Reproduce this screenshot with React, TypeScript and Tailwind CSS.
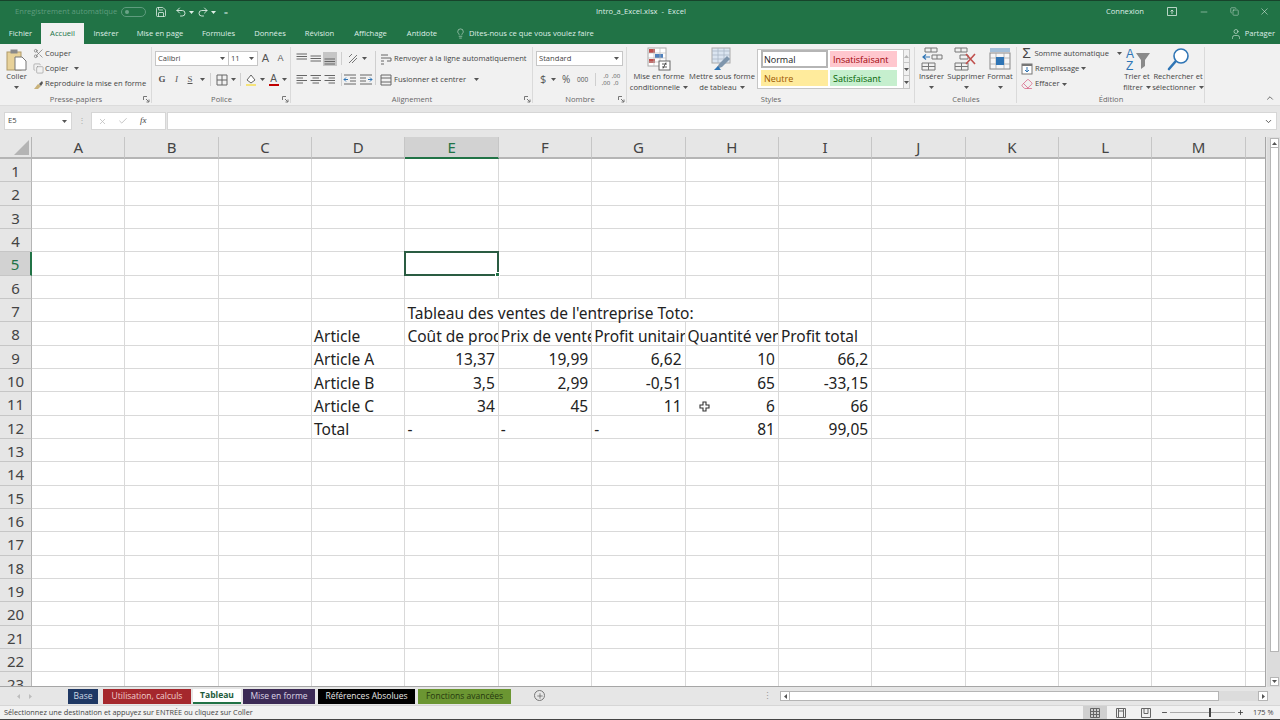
import React from 'react';
import { Save, Undo2, Redo2, Lightbulb, User, Scissors, Copy, Minus, X, Check, ChevronUp, ChevronDown, Plus, Eraser } from 'lucide-react';

const UI = "font-['Open_Sans',sans-serif]";

const columns = ['A', 'B', 'C', 'D', 'E', 'F', 'G', 'H', 'I', 'J', 'K', 'L', 'M', ''];
const rows = Array.from({ length: 23 }, (_, i) => i + 1);

type Cell = { text: string; right?: boolean; spill?: boolean };
const data: Record<string, Cell> = {
  D8: { text: 'Article' },
  D9: { text: 'Article A' },
  D10: { text: 'Article B' },
  D11: { text: 'Article C' },
  D12: { text: 'Total' },
  E7: { text: "Tableau des ventes de l'entreprise Toto:", spill: true },
  E8: { text: 'Coût de production' },
  F8: { text: 'Prix de vente' },
  G8: { text: 'Profit unitaire' },
  H8: { text: 'Quantité vendue' },
  I8: { text: 'Profit total' },
  E9: { text: '13,37', right: true },
  F9: { text: '19,99', right: true },
  G9: { text: '6,62', right: true },
  H9: { text: '10', right: true },
  I9: { text: '66,2', right: true },
  E10: { text: '3,5', right: true },
  F10: { text: '2,99', right: true },
  G10: { text: '-0,51', right: true },
  H10: { text: '65', right: true },
  I10: { text: '-33,15', right: true },
  E11: { text: '34', right: true },
  F11: { text: '45', right: true },
  G11: { text: '11', right: true },
  H11: { text: '6', right: true },
  I11: { text: '66', right: true },
  E12: { text: '-' },
  F12: { text: '-' },
  G12: { text: '-' },
  H12: { text: '81', right: true },
  I12: { text: '99,05', right: true },
};

const Caret = ({ className = '' }: { className?: string }) => (
  <svg width="5" height="3" viewBox="0 0 5 3" className={`shrink-0 ${className}`}>
    <path d="M0 0h5L2.5 3z" fill="#555" />
  </svg>
);

const Launcher = () => (
  <svg width="7" height="7" viewBox="0 0 7 7" className="shrink-0">
    <path d="M.5 4V.5H4M3 3l3 3M6 3.5V6H3.5" fill="none" stroke="#777" strokeWidth="1" />
  </svg>
);

const Lines = ({ align, shade = false }: { align: 'l' | 'c' | 'r' | 't' | 'm' | 'b'; shade?: boolean }) => {
  const short = align === 'l' ? [1.5, 8] : align === 'c' ? [3.5, 10] : align === 'r' ? [5.5, 12] : [1.5, 12];
  const ys = align === 't' ? [2, 4.5, 7] : align === 'm' ? [4, 6.5, 9] : align === 'b' ? [7, 9.5, 12] : [2.5, 5, 7.5, 10];
  return (
    <svg width="14" height="14" viewBox="0 0 14 14" className={shade ? 'bg-[#c6c6c6]' : ''}>
      {ys.map((y, i) => (
        <path key={y} d={i % 2 ? `M${short[0]} ${y}H${short[1]}` : `M1.5 ${y}H12`} stroke="#666" strokeWidth="1" />
      ))}
    </svg>
  );
};

const Group = ({ width, label, launcher, children }: { width: string; label: string; launcher?: boolean; children: React.ReactNode }) => (
  <div className={`flex flex-col h-full shrink-0 relative ${width}`}>
    <span className="absolute right-0 top-[3px] bottom-[2px] w-px bg-[#dadada]" />
    <div className="flex-1 flex min-h-0">{children}</div>
    <div className="h-[13px] pt-[3px] flex items-center relative">
      <span className="flex-1 text-center text-[7.6px] leading-none text-[#666]">{label}</span>
      {launcher && (
        <span className="absolute right-[2px] top-[4px]">
          <Launcher />
        </span>
      )}
    </div>
  </div>
);

const BigButton = ({ width, icon, line1, line2, caret = true }: { width: string; icon: React.ReactNode; line1: string; line2?: string; caret?: boolean }) => (
  <div className={`flex flex-col items-center shrink-0 ${width}`}>
    <div className="h-[24px] flex items-center">{icon}</div>
    <span className="text-[7.6px] leading-[11px] text-[#444] whitespace-nowrap">{line1}</span>
    <span className="text-[7.6px] leading-[11px] text-[#444] whitespace-nowrap flex items-center gap-[3px] h-[11px]">
      {line2}
      {caret && <Caret />}
    </span>
  </div>
);

const PasteIcon = () => (
  <svg width="21" height="22" viewBox="0 0 21 22">
    <rect x="1" y="3" width="14" height="18" fill="#e8d29a" stroke="#b09a68" />
    <rect x="4.5" y="0.5" width="7" height="4" fill="#8a8a8a" />
    <path d="M9 8h7l4 4v9H9z" fill="#fff" stroke="#777" />
  </svg>
);

const CondIcon = () => (
  <svg width="24" height="24" viewBox="0 0 24 24">
    <rect x="1" y="1" width="18" height="18" fill="#fff" stroke="#aaa" />
    <rect x="2" y="2" width="6" height="4" fill="#c0504d" />
    <rect x="8" y="7" width="8" height="4" fill="#4f81bd" />
    <rect x="2" y="12" width="6" height="4" fill="#c0504d" />
    <path d="M7 1v18M13 1v18M1 6h18M1 11h18M1 15h18" stroke="#bbb" strokeWidth=".7" />
    <rect x="12" y="14" width="11" height="9" fill="#fff" stroke="#666" />
    <path d="M15 17h5M15 20h5M19 15.5l-3 6" stroke="#333" strokeWidth=".8" />
  </svg>
);

const TableIcon = () => (
  <svg width="24" height="24" viewBox="0 0 24 24">
    <rect x="2" y="1" width="18" height="15" fill="#dbe5f1" stroke="#aaa" />
    <path d="M2 4h18M2 8h18M2 12h18M8 1v15M14 1v15" stroke="#a9b6c6" strokeWidth=".8" />
    <path d="M6 22l3-5 8-8 3 3-8 8z" fill="#7f96ad" />
    <path d="M4 23h7l-3-4z" fill="#2f75b5" />
  </svg>
);

const InsertIcon = () => (
  <svg width="22" height="24" viewBox="0 0 22 24">
    <path d="M4 1h12v4H4zM10 1v4M1 16h13v7H1zM7.5 16v7M1 19.5h13M11 8h10v4H11zM16 8v4" fill="none" stroke="#777" />
    <path d="M2 10h7M5 7.5L2 10l3 2.5" fill="none" stroke="#2f75b5" strokeWidth="1.2" />
  </svg>
);

const DeleteIcon = () => (
  <svg width="24" height="24" viewBox="0 0 24 24">
    <path d="M1 1h12v4H1zM7 1v4M1 16h13v7H1zM7.5 16v7M1 19.5h13M6 8h8v4H6z" fill="none" stroke="#777" />
    <path d="M12 7l9 10M21 7l-9 10" stroke="#c0504d" strokeWidth="1.6" />
  </svg>
);

const FormatIcon = () => (
  <svg width="22" height="24" viewBox="0 0 22 24">
    <path d="M1 2h20M1 4h20" stroke="#2f75b5" strokeWidth=".8" />
    <rect x="1" y="6" width="20" height="16" fill="#f6f6f6" stroke="#888" />
    <path d="M7 6v16M15 6v16M1 11h20M1 17h20" stroke="#aaa" strokeWidth=".8" />
    <rect x="7" y="10" width="8" height="8" fill="#2f75b5" />
  </svg>
);

const SortIcon = () => (
  <svg width="28" height="25" viewBox="0 0 28 25">
    <text x="3" y="11" fontSize="12" fill="#2f75b5" fontFamily="Liberation Sans">A</text>
    <text x="3" y="23" fontSize="12" fill="#2f75b5" fontFamily="Liberation Sans">Z</text>
    <path d="M13 6h14l-5 7v6l-4 3v-9z" fill="#8a8a8a" />
  </svg>
);

const FindIcon = () => (
  <svg width="24" height="25" viewBox="0 0 24 25">
    <circle cx="15" cy="9" r="7" fill="#fff" stroke="#2f75b5" strokeWidth="1.6" />
    <path d="M9.5 14.5L3 22" stroke="#2f75b5" strokeWidth="2.6" strokeLinecap="round" />
  </svg>
);

const Ribbon = () => (
  <div className={`h-[62px] bg-[#f1f1f1] flex text-[#444] border-b border-[#dcdcdc] ${UI}`}>
    <Group width="w-[152px]" label="Presse-papiers" launcher>
      <div className="w-[33px] flex flex-col items-center pt-[5px]">
        <PasteIcon />
        <span className="text-[7.6px] leading-[11px]">Coller</span>
        <Caret className="mt-[4px]" />
      </div>
      <div className="flex flex-col pt-[2px] text-[7.6px]">
        <div className="h-[15px] flex items-center gap-px"><Scissors size={11} color="#555" strokeWidth={1.2} />Couper</div>
        <div className="h-[16px] flex items-center gap-px"><Copy size={11} color="#888" strokeWidth={1.2} />Copier<Caret className="ml-[5px]" /></div>
        <div className="h-[16px] flex items-center gap-px whitespace-nowrap">
          <svg width="11" height="11" viewBox="0 0 11 11"><path d="M1 10l4-5 3 2-3 3z" fill="#c9b27a" /><path d="M6 5l3-3 1 2-2 3z" fill="#555" /></svg>
          Reproduire la mise en forme
        </div>
      </div>
    </Group>

    <Group width="w-[139px]" label="Police" launcher>
      <div className="flex flex-col pl-[3px] pt-[7px] gap-[6px]">
        <div className="flex items-center h-[15px]">
          <div className="w-[74px] h-[15px] bg-white border border-[#c6c6c6] flex items-center justify-between px-[2px] text-[7.6px]">Calibri<Caret className="mr-[1px]" /></div>
          <div className="w-[29px] h-[15px] bg-white border border-l-0 border-[#c6c6c6] flex items-center justify-between px-[2px] text-[7.6px]">11<Caret className="mr-[1px]" /></div>
          <span className="w-[15px] text-center text-[11px] font-['Liberation_Sans',sans-serif] text-[#555]">A</span>
          <span className="w-[15px] text-center text-[9px] font-['Liberation_Sans',sans-serif] text-[#555]">A</span>
        </div>
        <div className="flex items-center h-[15px] text-[9px] text-[#555] font-['Liberation_Serif',serif]">
          <span className="w-[14px] text-center font-bold">G</span>
          <span className="w-[15px] text-center italic">I</span>
          <span className="w-[12px] text-center underline">S</span>
          <Caret className="ml-[4px]" />
          <span className="w-px h-[13px] bg-[#cfcfcf] mx-[5px]" />
          <svg width="12" height="12" viewBox="0 0 12 12"><path d="M1 1h10v10H1zM6 1v10M1 6h10" fill="none" stroke="#666" /></svg>
          <Caret className="ml-[3px]" />
          <span className="w-px h-[13px] bg-[#cfcfcf] mx-[4px]" />
          <svg width="13" height="13" viewBox="0 0 13 13"><path d="M2 7l4-5 4 5-4 3z" fill="#fff" stroke="#666" /><path d="M1 11h10v2H1z" fill="#f5e37a" /></svg>
          <Caret className="ml-[2px]" />
          <span className="w-[13px] ml-[2px] flex flex-col items-center leading-[9px] font-['Liberation_Sans',sans-serif] text-[10px]">A<span className="w-[10px] h-[2px] bg-[#c00000] mt-[1px]" /></span>
          <Caret className="ml-[2px]" />
        </div>
      </div>
    </Group>

    <Group width="w-[242px]" label="Alignement" launcher>
      <div className="flex flex-col pl-[4px] pt-[7px] gap-[6px] w-[84px] shrink-0">
        <div className="flex items-center h-[15px]">
          <Lines align="t" /><Lines align="m" /><Lines align="b" shade />
          <span className="w-px h-[13px] bg-[#cfcfcf] mx-[4px]" />
          <svg width="14" height="14" viewBox="0 0 14 14"><path d="M3 11l8-8M6 11l5-5M3 5l3-3" stroke="#777" fill="none" /></svg>
          <Caret className="ml-[2px]" />
        </div>
        <div className="flex items-center h-[15px]">
          <Lines align="l" /><Lines align="c" /><Lines align="r" />
          <span className="w-px h-[13px] bg-[#cfcfcf] ml-[4px] mr-[1px]" />
          <svg width="14" height="14" viewBox="0 0 14 14"><path d="M1 2h12M7 5h6M7 8h6M1 11h12" stroke="#666" /><path d="M5 6.5H1M3 4.5l-2 2 2 2" stroke="#2f75b5" fill="none" /></svg>
          <svg width="14" height="14" viewBox="0 0 14 14" className="ml-[2px]"><path d="M1 2h12M1 5h6M1 8h6M1 11h12" stroke="#666" /><path d="M9 6.5h4M11 4.5l2 2-2 2" stroke="#2f75b5" fill="none" /></svg>
        </div>
      </div>
      <div className="w-px h-[34px] bg-[#cfcfcf] mt-[7px]" />
      <div className="flex flex-col pl-[4px] pt-[7px] gap-[6px] text-[7.6px] whitespace-nowrap">
        <div className="h-[15px] flex items-center gap-[2px]">
          <svg width="12" height="12" viewBox="0 0 12 12"><path d="M1 2h7M1 5h10v3H7M1 8h3M1 11h3" fill="none" stroke="#666" /></svg>
          Renvoyer à la ligne automatiquement
        </div>
        <div className="h-[15px] flex items-center gap-[2px]">
          <svg width="12" height="12" viewBox="0 0 12 12"><path d="M1 1h10v10H1zM1 4h10M1 8h10" fill="none" stroke="#666" /></svg>
          Fusionner et centrer<Caret className="ml-[6px]" />
        </div>
      </div>
    </Group>

    <Group width="w-[94px]" label="Nombre" launcher>
      <div className="flex flex-col pl-[3px] pt-[7px] gap-[6px]">
        <div className="w-[87px] h-[15px] bg-white border border-[#c6c6c6] flex items-center justify-between px-[2px] text-[7.6px]">Standard<Caret className="mr-[1px]" /></div>
        <div className="flex items-center h-[15px] text-[#555] pl-[4px]">
          <span className="text-[11px] w-[8px]">$</span>
          <Caret className="ml-[3px]" />
          <span className="text-[10px] w-[9px] ml-[6px]">%</span>
          <span className="text-[6.5px] w-[11px] ml-[6px]">000</span>
          <span className="w-px h-[13px] bg-[#cfcfcf] ml-[7px]" />
          <span className="text-[6px] leading-[7px] w-[10px] ml-[5px] text-center">,0<br />,00</span>
          <span className="text-[6px] leading-[7px] w-[10px] text-center">,00<br />,0</span>
        </div>
      </div>
    </Group>

    <Group width="w-[288px]" label="Styles">
      <BigButton width="w-[64px] pt-[3px]" icon={<CondIcon />} line1="Mise en forme" line2="conditionnelle" />
      <BigButton width="w-[62px] pt-[3px]" icon={<TableIcon />} line1="Mettre sous forme" line2="de tableau" />
      <div className="ml-[4px] mt-[5px] w-[153px] h-[40px] border border-[#c6c6c6] bg-white flex">
        <div className="w-[145px] grid grid-cols-[67px_67px] grid-rows-[18px_16px] gap-x-[2px] gap-y-[2px] pl-[3px] text-[9px] leading-none">
          <span className="border-2 border-[#b5b5b5] flex items-center pl-[1px] text-[#222]">Normal</span>
          <span className="bg-[#ffc7ce] my-[1px] flex items-center pl-[3px] text-[#9c0006]">Insatisfaisant</span>
          <span className="bg-[#ffeb9c] flex items-center pl-[3px] text-[#9c5700]">Neutre</span>
          <span className="bg-[#c6efce] flex items-center pl-[3px] text-[#006100]">Satisfaisant</span>
        </div>
        <div className="flex-1 flex flex-col border-l border-[#c6c6c6] bg-[#f1f1f1]">
          <span className="flex-1 flex items-center justify-center border-b border-[#c6c6c6]"><Caret className="rotate-180 opacity-40" /></span>
          <span className="flex-1 flex items-center justify-center border-b border-[#c6c6c6]"><Caret /></span>
          <span className="flex-1 flex items-center justify-center"><Caret /></span>
        </div>
      </div>
    </Group>

    <Group width="w-[102px]" label="Cellules">
      <BigButton width="w-[33px] pt-[3px]" icon={<InsertIcon />} line1="Insérer" />
      <BigButton width="w-[36px] pt-[3px]" icon={<DeleteIcon />} line1="Supprimer" />
      <BigButton width="w-[32px] pt-[3px]" icon={<FormatIcon />} line1="Format" />
    </Group>

    <Group width="w-[188px]" label="Édition">
      <div className="flex flex-col pl-[4px] pt-[2px] text-[7.6px] w-[105px] shrink-0">
        <div className="h-[15px] flex items-center gap-[2px] whitespace-nowrap"><span className="w-[12px] text-[14px] leading-none text-center font-['Liberation_Sans',sans-serif]">Σ</span>Somme automatique<Caret className="ml-[6px]" /></div>
        <div className="h-[16px] flex items-center gap-[2px]">
          <svg width="12" height="12" viewBox="0 0 12 12"><rect x="1" y="1" width="10" height="10" fill="#fff" stroke="#777" /><path d="M1 1h10v2H1z" fill="#777" /><path d="M6 4v5M4 7l2 2 2-2" stroke="#2f75b5" fill="none" /></svg>
          Remplissage<Caret />
        </div>
        <div className="h-[16px] flex items-center gap-[2px]"><Eraser size={12} color="#d9688a" strokeWidth={1.6} />Effacer<Caret /></div>
      </div>
      <BigButton width="w-[30px] pt-[3px]" icon={<SortIcon />} line1="Trier et" line2="filtrer" />
      <BigButton width="w-[50px] ml-[1px] pt-[3px]" icon={<FindIcon />} line1="Rechercher et" line2="sélectionner" />
    </Group>

    <div className="flex-1 flex items-end justify-end pr-[5px] pb-[2px]">
      <ChevronUp size={10} color="#555" strokeWidth={2} />
    </div>
  </div>
);

const tabs = ['Fichier', 'Accueil', 'Insérer', 'Mise en page', 'Formules', 'Données', 'Révision', 'Affichage', 'Antidote'];
const tabWidths = ['w-[41px]', 'w-[43px]', 'w-[44px]', 'w-[64px]', 'w-[53px]', 'w-[50px]', 'w-[49px]', 'w-[53px]', 'w-[50px]'];

const TitleBars = () => (
  <div className={`bg-[#217346] text-[#dfeee6] ${UI}`}>
    <div className="h-[23px] border-t border-[#17432b] flex items-center relative text-[7.6px]">
      <span className="ml-[15px] w-[101px] text-[#5f9c7e] whitespace-nowrap">Enregistrement automatique</span>
      <span className="ml-[5px] w-[25px] h-[10px] rounded-full border border-[#5f9c7e] flex items-center pl-[3px]"><span className="w-[4px] h-[4px] rounded-full bg-[#6aa387]" /></span>
      <Save size={12} className="ml-[9px]" strokeWidth={1.6} />
      <Undo2 size={12} className="ml-[8px]" strokeWidth={1.8} />
      <Caret className="ml-[2px] [&_path]:fill-[#dfeee6]" />
      <Redo2 size={12} className="ml-[3px]" strokeWidth={1.8} />
      <Caret className="ml-[2px] [&_path]:fill-[#dfeee6]" />
      <span className="ml-[8px] text-[7px] leading-none">=</span>
      <span className="absolute left-[596px] top-[5px] whitespace-nowrap">Intro_a_Excel.xlsx&nbsp; -&nbsp; Excel</span>
      <div className="ml-auto flex items-center">
        <span>Connexion</span>
        <svg width="10" height="9" viewBox="0 0 10 9" className="ml-[23px]"><path d="M.5.5h9v8h-9zM5 7V3M3.5 4.5L5 3l1.500 1.500" fill="none" stroke="#dfeee6" strokeWidth=".8" /></svg>
        <Minus size={10} className="ml-[22px]" strokeWidth={1.2} />
        <Copy size={9} className="ml-[21px]" strokeWidth={1.2} />
        <X size={11} className="ml-[20px] mr-[10px]" strokeWidth={1.2} />
      </div>
    </div>
    <div className="h-[21px] flex items-center text-[7.6px]">
      {tabs.map((t, i) => (
        <div key={t} className={`h-[21px] flex items-center justify-center ${tabWidths[i]} ${t === 'Accueil' ? 'bg-[#f1f1f1] text-[#217346]' : ''}`}>{t}</div>
      ))}
      <Lightbulb size={11} className="ml-[8px]" strokeWidth={1.2} />
      <span className="ml-[3px] w-[124px] whitespace-nowrap">Dites-nous ce que vous voulez faire</span>
      <div className="ml-auto flex items-center h-full gap-[3px] pr-[5px]">
        <User size={12} strokeWidth={1.2} />
        <span>Partager</span>
      </div>
    </div>
  </div>
);

const FormulaBar = () => (
  <div className={`h-[31px] bg-[#e6e6e6] flex items-start pt-[6px] text-[7.6px] text-[#444] ${UI}`}>
    <div className="ml-[4px] w-[68px] h-[18px] bg-white border border-[#d6d6d6] flex items-center justify-between px-[3px]">E5<Caret className="mr-[1px]" /></div>
    <span className="w-[19px] text-center text-[#aaa] leading-[16px]">⋮</span>
    <div className="w-[75px] h-[18px] bg-white border border-[#d6d6d6] flex items-center pl-[6px] gap-[11px]">
      <X size={9} color="#bbb" />
      <Check size={10} color="#bbb" />
      <span className="font-['Liberation_Serif',serif] italic text-[9px] ml-[1px]">fx</span>
    </div>
    <div className="ml-[1px] flex-1 mr-[3px] h-[18px] bg-white border border-[#d6d6d6] flex items-center justify-end pr-[3px]">
      <ChevronDown size={9} color="#555" strokeWidth={2.5} />
    </div>
  </div>
);

const SheetGrid = () => (
  <div className="flex flex-1 min-h-0 bg-[#e6e6e6]">
    <div className="w-[1266px] shrink-0 overflow-hidden border-b border-r border-[#a6a6a6] bg-white">
      <div className="grid grid-cols-[32px_repeat(13,93.37px)_20px] grid-rows-[22px] auto-rows-[23.34px] font-['Noto_Sans',sans-serif] text-[15.5px] leading-[18px] text-[#222]">
        <div className="bg-[#e6e6e6] border-r border-b-2 border-[#b5b5b5] flex items-end justify-end p-[2px]">
          <svg width="15" height="15" viewBox="0 0 15 15"><path d="M15 0v15H0z" fill="#b4b4b4" /></svg>
        </div>
        {columns.map((c, i) => (
          <div key={i} className={`flex items-center justify-center border-r border-r-[#c6c6c6] border-b-2 text-[15px] ${c === 'E' ? 'bg-[#d2d2d2] border-b-[#217346] text-[#217346]' : 'bg-[#e6e6e6] border-b-[#b5b5b5] text-[#444]'}`}>{c}</div>
        ))}
        {rows.map((r) => (
          <React.Fragment key={r}>
            <div className={`flex items-center justify-center pt-[2px] border-b border-b-[#c6c6c6] text-[15px] ${r === 5 ? 'bg-[#d2d2d2] border-r-2 border-r-[#217346] text-[#217346]' : 'bg-[#e6e6e6] border-r border-r-[#b5b5b5] text-[#444]'}`}>{r}</div>
            {columns.map((c, i) => {
              const cell = data[`${c}${r}`];
              const selected = c === 'E' && r === 5;
              const noRight = (c === 'E' || c === 'F' || c === 'G') && r === 7;
              return (
                <div
                  key={i}
                  className={`relative flex items-center whitespace-nowrap ${cell?.spill ? 'overflow-visible z-10' : selected ? 'overflow-visible z-20' : 'overflow-hidden'} ${selected ? 'border-2 border-[#2a5c42] -ml-px -mt-px' : `border-b border-b-[#d9d9d9] ${noRight ? '' : 'border-r border-r-[#d9d9d9]'}`} ${cell?.right ? 'justify-end pr-[3px] pt-[5px]' : 'pl-[2px] pt-[5px]'}`}
                >
                  {cell?.text}
                  {selected && <span className="absolute -right-[3px] -bottom-[3px] w-[5px] h-[5px] bg-[#217346] border border-white" />}
                  {c === 'H' && r === 11 && (
                    <svg width="11" height="11" viewBox="0 0 11 11" className="absolute left-[13px] top-[9px]">
                      <path d="M4 1h3v3h3v3H7v3H4V7H1V4h3z" fill="#fff" stroke="#333" strokeWidth="1.100" />
                    </svg>
                  )}
                </div>
              );
            })}
          </React.Fragment>
        ))}
      </div>
    </div>
    <div className="w-[14px] flex flex-col pl-[3px] pr-[2px] pt-[1px] pb-[1px] bg-[#dcdcdc] border-l border-[#e6e6e6]">
      <div className="w-[9px] h-[10px] bg-white border border-[#b5b5b5] flex items-center justify-center"><Caret className="rotate-180" /></div>
      <div className="w-[9px] h-[504px] bg-white border border-[#b5b5b5] border-t-0" />
      <div className="flex-1" />
      <div className="w-[9px] h-[9px] bg-white border border-[#b5b5b5] flex items-center justify-center"><Caret /></div>
    </div>
  </div>
);

const sheets = [
  { name: 'Base', cls: 'ml-[36px] w-[30px] bg-[#1f3864] text-[#cfd8e6]' },
  { name: 'Utilisation, calculs', cls: 'ml-[5px] w-[88px] bg-[#a5282d] text-[#f0cfcf]' },
  { name: 'Tableau', cls: 'ml-[2px] w-[48px] bg-white text-[#1d5a3a] font-bold border-b-2 border-[#217346]' },
  { name: 'Mise en forme', cls: 'ml-[2px] w-[72px] bg-[#3b2a55] text-[#ddd5e6]' },
  { name: 'Références Absolues', cls: 'ml-[3px] w-[97px] bg-black text-[#e6e6e6]' },
  { name: 'Fonctions avancées', cls: 'ml-[3px] w-[93px] bg-[#6b9632] text-[#26380f]' },
];

const SheetTabs = () => (
  <div className={`h-[18px] bg-[#e6e6e6] flex items-start text-[8.5px] ${UI}`}>
    <svg width="3" height="5" viewBox="0 0 3 5" className="ml-[17px] mt-[7px] shrink-0"><path d="M3 0v5L0 2.500z" fill="#bdbdbd" /></svg>
    <svg width="3" height="5" viewBox="0 0 3 5" className="ml-[9px] mt-[7px] shrink-0"><path d="M0 0v5l3-2.500z" fill="#bdbdbd" /></svg>
    {sheets.map((s) => (
      <div key={s.name} className={`h-[15px] mt-[2px] shrink-0 flex items-center justify-center whitespace-nowrap ${s.cls}`}>{s.name}</div>
    ))}
    <span className="ml-[23px] mt-[3px] w-[11px] h-[11px] rounded-full border border-[#777] flex items-center justify-center shrink-0">
      <Plus size={8} color="#555" strokeWidth={2} />
    </span>
    <span className="ml-[218px] mt-[3px] text-[#999] leading-[12px]">⋮</span>
    <div className="ml-[8px] mt-[4px] w-[488px] h-[10px] flex bg-[#dcdcdc]">
      <span className="w-[10px] bg-white border border-[#b5b5b5] flex items-center justify-center"><Caret className="rotate-90" /></span>
      <span className="w-[429px] bg-white border-y border-r border-[#b5b5b5]" />
      <span className="flex-1" />
      <span className="w-[10px] bg-white border border-[#b5b5b5] flex items-center justify-center"><Caret className="-rotate-90" /></span>
    </div>
  </div>
);

const StatusBar = () => (
  <div className={`h-[15px] bg-[#f1f1f1] flex items-center text-[7.3px] text-[#444] border-t border-t-[#d6d6d6] border-b border-b-[#444] ${UI}`}>
    <span className="ml-[4px]">Sélectionnez une destination et appuyez sur ENTRÉE ou cliquez sur Coller</span>
    <div className="ml-auto flex items-center h-full">
      <span className="w-[24px] h-full bg-[#cfcfcf] flex items-center justify-center">
        <svg width="10" height="10" viewBox="0 0 10 10"><path d="M.5.5h9v9h-9zM3.500.5v9M6.500.5v9M.5 3.500h9M.5 6.500h9" fill="none" stroke="#666" /></svg>
      </span>
      <svg width="10" height="10" viewBox="0 0 10 10" className="ml-[9px]"><path d="M.5.5h9v9h-9zM2.500.5v9M7.500.5v9M2.500 3h5" fill="none" stroke="#666" /></svg>
      <svg width="10" height="10" viewBox="0 0 10 10" className="ml-[15px]"><path d="M.5.5h9v9h-9zM3 .5v5h4v-5" fill="none" stroke="#666" /></svg>
      <Minus size={7} className="ml-[10px]" strokeWidth={3} />
      <div className="relative w-[65px] h-px bg-[#aaa] mx-[2px]">
        <span className="absolute left-[39px] -top-[4px] w-[2px] h-[9px] bg-[#444]" />
      </div>
      <Plus size={7} strokeWidth={3} />
      <span className="ml-[9px] mr-[5px] w-[22px] whitespace-nowrap">175 %</span>
    </div>
  </div>
);

export default function App() {
  return (
    <div className="w-[1280px] h-[720px] overflow-hidden flex flex-col bg-[#e6e6e6]">
      <TitleBars />
      <Ribbon />
      <FormulaBar />
      <SheetGrid />
      <SheetTabs />
      <StatusBar />
    </div>
  );
}
